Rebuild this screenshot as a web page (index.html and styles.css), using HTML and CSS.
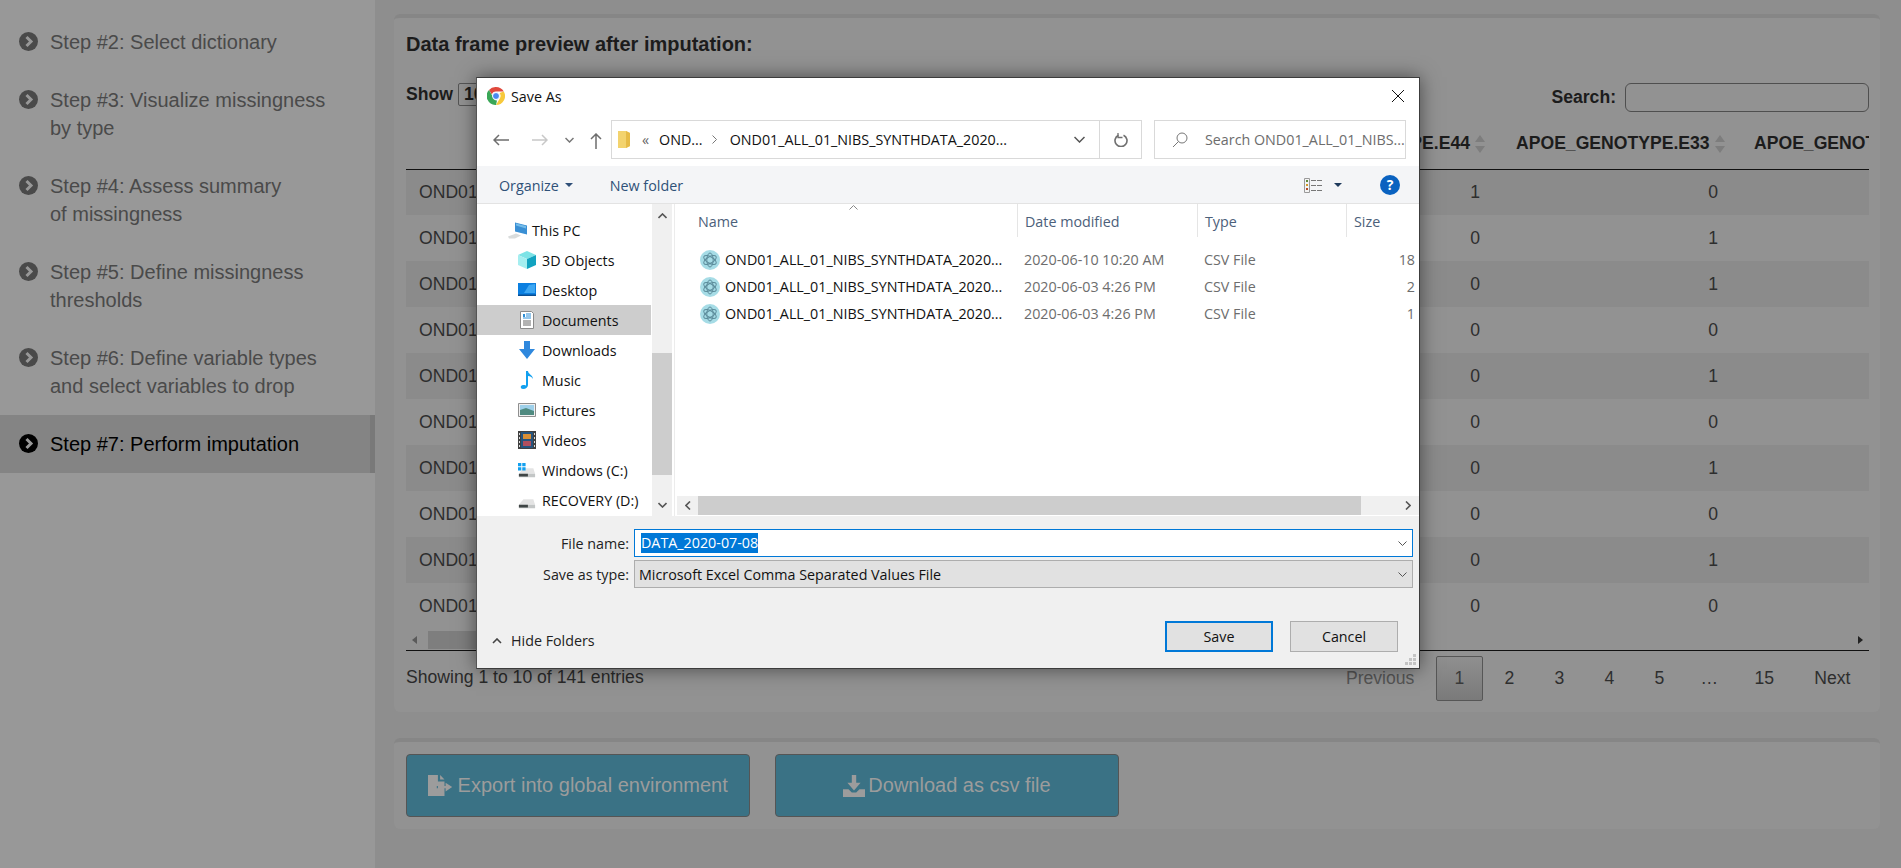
FILE: index.html
```html
<!DOCTYPE html>
<html lang="en">
<head>
  <meta charset="UTF-8" />
  <title>Perform imputation</title>
  <link rel="stylesheet" href="styles.css">
</head>
<body>
  <svg class="sprites" width="0" height="0">
    <symbol id="step-icon" viewBox="0 0 19 19">
      <circle cx="9.5" cy="9.5" r="9.5" fill="currentColor" />
      <path d="M7.5 5l4.5 4.5-4.5 4.5" fill="none" stroke="#989898" stroke-width="3" />
    </symbol>
    <symbol id="sort-icon" viewBox="0 0 10 18">
      <path d="M5 0l5 7H0zM5 18l-5-7h10z" fill="#7d7d7d" />
    </symbol>
    <symbol id="file-icon" viewBox="0 0 20 20">
      <circle cx="10" cy="10" r="10" fill="#a6dce6" />
      <g fill="none" stroke="#5d8d9c" stroke-width="1">
        <ellipse cx="10" cy="10" rx="7" ry="3.2" transform="rotate(30 10 10)" />
        <ellipse cx="10" cy="10" rx="7" ry="3.2" transform="rotate(-30 10 10)" />
        <ellipse cx="10" cy="10" rx="7" ry="3.2" transform="rotate(90 10 10)" />
      </g>
    </symbol>
    <symbol id="drive-icon" viewBox="0 0 20 12">
      <path d="M1 7l5-6h11l2 6z" fill="#e4e4e4" />
      <path d="M1 7h18v4H1z" fill="#c3c6c6" />
      <path d="M1 7h10v3H1z" fill="#3f4545" />
    </symbol>
  </svg>

  <div class="page">
    <nav class="sidebar">
      <a class="step"><svg class="step-icon"><use href="#step-icon" /></svg><span>Step #2: Select dictionary</span></a>
      <a class="step"><svg class="step-icon"><use href="#step-icon" /></svg><span>Step #3: Visualize missingness<br>by type</span></a>
      <a class="step"><svg class="step-icon"><use href="#step-icon" /></svg><span>Step #4: Assess summary<br>of missingness</span></a>
      <a class="step"><svg class="step-icon"><use href="#step-icon" /></svg><span>Step #5: Define missingness<br>thresholds</span></a>
      <a class="step"><svg class="step-icon"><use href="#step-icon" /></svg><span>Step #6: Define variable types<br>and select variables to drop</span></a>
      <a class="step active"><svg class="step-icon"><use href="#step-icon" /></svg><span>Step #7: Perform imputation</span></a>
    </nav>

    <main class="content">
      <section class="card">
        <h3 class="card-title">Data frame preview after imputation:</h3>
        <div class="table-controls">
          <label class="show-label">Show <span class="show-select">10</span></label>
          <label class="search-label">Search: <input class="search-input" type="text" /></label>
        </div>
        <div class="table-clip">
          <table class="data-table">
            <thead>
              <tr>
                <th class="col-id">ID</th>
                <th class="col-a">APOE_GENOTYPE.E44<svg class="sort"><use href="#sort-icon" /></svg></th>
                <th class="col-b">APOE_GENOTYPE.E33<svg class="sort"><use href="#sort-icon" /></svg></th>
                <th class="col-c">APOE_GENOTYPE.E34<svg class="sort"><use href="#sort-icon" /></svg></th>
              </tr>
            </thead>
            <tbody>
              <tr><td>OND01</td><td class="num">1</td><td class="num">0</td><td></td></tr>
              <tr><td>OND01</td><td class="num">0</td><td class="num">1</td><td></td></tr>
              <tr><td>OND01</td><td class="num">0</td><td class="num">1</td><td></td></tr>
              <tr><td>OND01</td><td class="num">0</td><td class="num">0</td><td></td></tr>
              <tr><td>OND01</td><td class="num">0</td><td class="num">1</td><td></td></tr>
              <tr><td>OND01</td><td class="num">0</td><td class="num">0</td><td></td></tr>
              <tr><td>OND01</td><td class="num">0</td><td class="num">1</td><td></td></tr>
              <tr><td>OND01</td><td class="num">0</td><td class="num">0</td><td></td></tr>
              <tr><td>OND01</td><td class="num">0</td><td class="num">1</td><td></td></tr>
              <tr><td>OND01</td><td class="num">0</td><td class="num">0</td><td></td></tr>
            </tbody>
          </table>
        </div>
        <div class="table-scroll">
          <span class="tri tri-left"></span>
          <span class="table-thumb"></span>
          <span class="tri tri-right"></span>
        </div>
        <div class="table-footer">
          <span class="table-info">Showing 1 to 10 of 141 entries</span>
          <div class="pager">
            <a class="page-btn muted">Previous</a>
            <a class="page-btn current">1</a>
            <a class="page-btn">2</a>
            <a class="page-btn">3</a>
            <a class="page-btn">4</a>
            <a class="page-btn">5</a>
            <span class="page-btn page-gap">…</span>
            <a class="page-btn">15</a>
            <a class="page-btn">Next</a>
          </div>
        </div>
      </section>

      <section class="card actions">
        <button class="action-btn">
          <svg class="action-icon" viewBox="0 0 24 20"><path d="M0 0h9v6h6v4H8v2h7v7H0zM11 0l4 4h-4zM16 7l6 4-6 4v-3H9v-2h7z" fill="currentColor" /></svg>
          Export into global environment
        </button>
        <button class="action-btn">
          <svg class="action-icon" viewBox="0 0 20 20"><path d="M8 0h4v7h4l-6 7-6-7h4zM0 13h5l3 3h4l3-3h5v7H0z" fill="currentColor" /></svg>
          Download as csv file
        </button>
      </section>
    </main>
  </div>

  <div class="dialog">
    <header class="dlg-title">
      <svg class="chrome" viewBox="0 0 18 18">
        <path d="M9 0a9 9 0 0 1 7.8 4.5H9a4.500 4.500 0 0 0-4.200 3L2 3a9 9 0 0 1 7-3z" fill="#e0493d" />
        <path d="M16.800 4.500A9 9 0 0 1 9 18l3.900-6.800A4.500 4.500 0 0 0 12.500 6z" fill="#f7c93c" />
        <path d="M9 18A9 9 0 0 1 2 3l3.800 6.700A4.500 4.500 0 0 0 10 13.400z" fill="#3aa757" />
        <circle cx="9" cy="9" r="3.500" fill="#4a89f0" stroke="#fff" />
      </svg>
      <span class="dlg-name">Save As</span>
      <svg class="close" viewBox="0 0 12 12"><path d="M0 0l12 12M12 0L0 12" stroke="#111" fill="none" /></svg>
    </header>

    <div class="dlg-nav">
      <div class="nav-buttons">
        <svg class="nav-arrow" viewBox="0 0 16 12"><path d="M6 1L1 6l5 5M1 6h15" fill="none" stroke="#6e6e6e" stroke-width="1.500" /></svg>
        <svg class="nav-arrow fwd" viewBox="0 0 16 12"><path d="M10 1l5 5-5 5M15 6H0" fill="none" stroke="#c8c8c8" stroke-width="1.500" /></svg>
        <svg class="nav-down" viewBox="0 0 9 6"><path d="M.5 1l4 4 4-4" fill="none" stroke="#777" stroke-width="1.500" /></svg>
        <svg class="nav-up" viewBox="0 0 12 16"><path d="M1 6l5-5 5 5M6 1v15" fill="none" stroke="#6e6e6e" stroke-width="1.500" /></svg>
      </div>
      <div class="address">
        <svg class="folder" viewBox="0 0 12 17"><path d="M0 0h8l4 2v13l-4 2H0z" fill="#f3d36e" /><path d="M8 0l4 2v13l-4 2z" fill="#e6bb47" /></svg>
        <span class="crumb-back">«</span>
        <span class="crumb">OND...</span>
        <svg class="crumb-sep" viewBox="0 0 5 9"><path d="M.5.5l4 4-4 4" fill="none" stroke="#777" /></svg>
        <span class="crumb">OND01_ALL_01_NIBS_SYNTHDATA_2020...</span>
        <svg class="addr-down" viewBox="0 0 11 7"><path d="M.5 1l5 5 5-5" fill="none" stroke="#555" stroke-width="1.500" /></svg>
        <div class="refresh">
          <svg class="refresh-icon" viewBox="0 0 14 14"><path d="M4.500 2.200A6 6 0 1 0 9.500 2.200" fill="none" stroke="#707070" stroke-width="1.600" /><path d="M4 0v4.500H8.500" fill="none" stroke="#707070" stroke-width="1.300" /></svg>
        </div>
      </div>
      <div class="dlg-search">
        <svg class="search-icon" viewBox="0 0 16 16"><circle cx="10" cy="6" r="5" fill="none" stroke="#777" /><path d="M6.500 9.500L1 15" stroke="#777" fill="none" /></svg>
        <span>Search OND01_ALL_01_NIBS...</span>
      </div>
    </div>

    <div class="dlg-toolbar">
      <span class="tool-btn">Organize<span class="caret"></span></span>
      <span class="tool-btn new-folder">New folder</span>
      <svg class="view-icon" viewBox="0 0 18 15"><path d="M.5.500h5v14h-5z" fill="#f4f4f4" stroke="#9a9a9a" /><path d="M2 2h2v2H2z" fill="#5f8a3c" /><path d="M2 6h2v2H2z" fill="#d19a2a" /><path d="M2 10h2v2H2z" fill="#b54a2a" /><path d="M7 2.500h11M7 7.500h11M7 12.500h11" stroke="#777" stroke-dasharray="5 1" /></svg>
      <span class="caret dark"></span>
      <span class="help">?</span>
    </div>

    <div class="dlg-main">
      <aside class="folders">
        <ul class="folder-list">
          <li class="folder-row root">
            <svg class="fi wide" viewBox="0 0 20 17"><path d="M7 1l12 3v9L7 10z" fill="#3a8fd4" /><path d="M8 2l10 2.500V7L8 4z" fill="#74bce9" /><path d="M0 15l8-3 5 2-6 3H1z" fill="#d9dcdc" /></svg>
            This PC
          </li>
          <li class="folder-row">
            <svg class="fi" viewBox="0 0 18 18"><path d="M9 0l9 4-9 4-9-4z" fill="#7ce3e6" /><path d="M0 4l9 4v10l-9-4z" fill="#a5eef0" /><path d="M18 4L9 8v10l9-4z" fill="#12a3c0" /></svg>
            3D Objects
          </li>
          <li class="folder-row">
            <svg class="fi" viewBox="0 0 18 18"><path d="M0 2h18v13H0z" fill="#0b7fe0" /><path d="M0 13.500h18V15H0z" fill="#0a4f93" /><path d="M11 4l6-1v9H6z" fill="#3ea7f2" /></svg>
            Desktop
          </li>
          <li class="folder-row selected">
            <svg class="fi" viewBox="0 0 18 18"><path d="M2.500.500h11l2 2v15h-13z" fill="#fff" stroke="#8a8a8a" /><path d="M8 3h5M8 5h5M5 7h8" stroke="#2d8ed6" /><path d="M5 3h2v3H5z" fill="#2d8ed6" /><path d="M5 10h8M5 12h8M5 14h8" stroke="#666" /></svg>
            Documents
          </li>
          <li class="folder-row">
            <svg class="fi" viewBox="0 0 18 18"><path d="M6 0h6v8h5l-8 10L1 8h5z" fill="#2f88dd" /></svg>
            Downloads
          </li>
          <li class="folder-row">
            <svg class="fi" viewBox="0 0 18 18"><path d="M8 0h2c0 3 5 4 5 8-1-2-3-3-5-3v9c0 2-2 4-5 4s-3-4 0-4c1 0 2 0 3 .5z" fill="#12a0ef" /></svg>
            Music
          </li>
          <li class="folder-row">
            <svg class="fi" viewBox="0 0 18 14"><path d="M.5.500h17v13H.5z" fill="#f0f0f0" stroke="#8f8f8f" /><path d="M2 2h14v6H2z" fill="#9ed0ea" /><path d="M2 7l6-2 8 3v4H2z" fill="#4f8a80" /></svg>
            Pictures
          </li>
          <li class="folder-row">
            <svg class="fi" viewBox="0 0 18 18"><path d="M0 0h18v18H0z" fill="#404040" /><path d="M3 1h12v16H3z" fill="#26547e" /><path d="M5 3h8v5H5z" fill="#d98f35" /><path d="M5 10h8v5H5z" fill="#b14f5e" /><path d="M1 2h1v2H1zM1 6h1v2H1zM1 10h1v2H1zM1 14h1v2H1zM16 2h1v2h-1zM16 6h1v2h-1zM16 10h1v2h-1zM16 14h1v2h-1z" fill="#ddd" /></svg>
            Videos
          </li>
          <li class="folder-row">
            <svg class="fi" viewBox="0 0 19 15"><use href="#drive-icon" y="3" /><path d="M0 0h3.500v3.500H0zM4.500 0H8v3.500H4.500zM0 4.500h3.500V8H0zM4.500 4.500H8V8H4.500z" fill="#12a0ef" /></svg>
            Windows (C:)
          </li>
          <li class="folder-row">
            <svg class="fi" viewBox="0 0 19 15"><use href="#drive-icon" y="4" /></svg>
            RECOVERY (D:)
          </li>
        </ul>
        <div class="v-scroll">
          <svg class="sb-arrow" viewBox="0 0 9 6"><path d="M.5 5l4-4 4 4" fill="none" stroke="#555" stroke-width="1.600" /></svg>
          <span class="v-thumb"></span>
          <svg class="sb-arrow low" viewBox="0 0 9 6"><path d="M.5 1l4 4 4-4" fill="none" stroke="#555" stroke-width="1.600" /></svg>
        </div>
      </aside>

      <div class="files">
        <div class="file-head">
          <span class="head-cell name">Name<svg class="sort-up" viewBox="0 0 9 5"><path d="M.5 4.500l4-4 4 4" fill="none" stroke="#888" /></svg></span>
          <span class="head-cell">Date modified</span>
          <span class="head-cell">Type</span>
          <span class="head-cell">Size</span>
        </div>
        <div class="file-list">
          <div class="file-row">
            <span class="file-name"><svg class="file-icon"><use href="#file-icon" /></svg>OND01_ALL_01_NIBS_SYNTHDATA_2020...</span>
            <span class="file-meta">2020-06-10 10:20 AM</span>
            <span class="file-meta">CSV File</span>
            <span class="file-meta size">18</span>
          </div>
          <div class="file-row">
            <span class="file-name"><svg class="file-icon"><use href="#file-icon" /></svg>OND01_ALL_01_NIBS_SYNTHDATA_2020...</span>
            <span class="file-meta">2020-06-03 4:26 PM</span>
            <span class="file-meta">CSV File</span>
            <span class="file-meta size">2</span>
          </div>
          <div class="file-row">
            <span class="file-name"><svg class="file-icon"><use href="#file-icon" /></svg>OND01_ALL_01_NIBS_SYNTHDATA_2020...</span>
            <span class="file-meta">2020-06-03 4:26 PM</span>
            <span class="file-meta">CSV File</span>
            <span class="file-meta size">1</span>
          </div>
        </div>
        <div class="h-scroll">
          <svg class="hb-arrow" viewBox="0 0 6 9"><path d="M5 .5l-4 4 4 4" fill="none" stroke="#555" stroke-width="1.600" /></svg>
          <span class="h-thumb"></span>
          <svg class="hb-arrow right" viewBox="0 0 6 9"><path d="M1 .5l4 4-4 4" fill="none" stroke="#555" stroke-width="1.600" /></svg>
        </div>
      </div>
    </div>

    <footer class="dlg-footer">
      <div class="field-row">
        <span class="field-label">File name:</span>
        <div class="field focused">
          <span class="selected-text">DATA_2020-07-08</span>
          <svg class="field-down" viewBox="0 0 9 5"><path d="M.5.500l4 4 4-4" fill="none" stroke="#555" /></svg>
        </div>
      </div>
      <div class="field-row">
        <span class="field-label">Save as type:</span>
        <div class="field combo">
          <span>Microsoft Excel Comma Separated Values File</span>
          <svg class="field-down" viewBox="0 0 9 5"><path d="M.5.500l4 4 4-4" fill="none" stroke="#555" /></svg>
        </div>
      </div>
      <div class="dlg-buttons">
        <span class="hide-folders">
          <svg class="hide-icon" viewBox="0 0 10 6"><path d="M1 5l4-4 4 4" fill="none" stroke="#444" stroke-width="1.600" /></svg>
          Hide Folders
        </span>
        <button class="dlg-btn primary">Save</button>
        <button class="dlg-btn">Cancel</button>
      </div>
      <svg class="grip" viewBox="0 0 11 11"><path d="M8 0h3v3H8zM4 4h3v3H4zM8 4h3v3H8zM0 8h3v3H0zM4 8h3v3H4zM8 8h3v3H8z" fill="#c4c4c4" /></svg>
    </footer>
  </div>
</body>
</html>
```

FILE: styles.css
```css
* {
  box-sizing: border-box;
}

html, body {
  margin: 0;
  height: 868px;
  overflow: hidden;
}

body {
  background-color: #8e8e8e;
  color: #2a2a2a;
  font-family: "Liberation Sans", Arial, sans-serif;
  font-size: 17.6px;
}

.sprites {
  position: absolute;
}

.page {
  display: grid;
  grid-template-columns: 375px minmax(0, 1fr);
  height: 868px;
}

/* sidebar */

.sidebar {
  background-color: #989898;
  padding-top: 13px;
}

.step {
  display: flex;
  align-items: flex-start;
  gap: 12px;
  padding: 15px 19px;
  color: #4a4a4a;
  font-size: 20px;
  line-height: 28px;
}

.step-icon {
  flex: none;
  width: 19px;
  height: 19px;
  margin-top: 4px;
}

.step.active {
  background-color: #848484;
  border-right: 5px solid #797979;
  color: #000;
}

/* main cards */

.content {
  padding: 14px 21px 0 19px;
}

.card {
  background-color: #929292;
  border-top: 4px solid #868686;
  border-radius: 6px;
  padding: 0 11px 11px 12px;
}

.card-title {
  margin: 0 0 29px;
  padding-top: 16px;
  color: #1c1c1c;
  font-size: 20px;
  line-height: 20px;
}

.table-controls {
  display: flex;
  justify-content: space-between;
  align-items: flex-start;
  height: 29px;
}

.show-label {
  display: flex;
  align-items: center;
  gap: 5px;
  color: #1c1c1c;
  font-size: 17.6px;
  font-weight: bold;
}

.show-select {
  width: 50px;
  height: 23px;
  padding-left: 5px;
  border: 1px solid #555;
  border-radius: 2px;
  line-height: 21px;
}

.search-label {
  display: flex;
  align-items: center;
  gap: 9px;
  color: #1c1c1c;
  font-weight: bold;
}

.search-input {
  width: 244px;
  height: 29px;
  background: transparent;
  border: 1px solid #4f4f4f;
  border-radius: 6px;
}

.table-clip {
  overflow: hidden;
}

.data-table {
  width: 1600px;
  border-collapse: collapse;
  table-layout: fixed;
}

.data-table th {
  height: 57px;
  padding: 6px 0 0 16px;
  border-bottom: 1px solid #111;
  color: #1c1c1c;
  font-size: 17.6px;
  text-align: right;
  white-space: nowrap;
}

.col-id {
  width: 840px;
}

.col-a {
  width: 254px;
}

.col-b {
  width: 238px;
}

.data-table .col-id {
  color: transparent;
}

.data-table .col-c {
  text-align: left;
}

.sort {
  width: 10px;
  height: 18px;
  margin: 0 15px 0 5px;
  vertical-align: -4px;
}

.data-table td {
  height: 46px;
  padding: 0 13px;
  color: #2e2e2e;
}

.data-table td.num {
  padding-right: 20px;
  text-align: right;
}

.data-table tbody tr:nth-child(odd) {
  background-color: #8b8b8b;
}

.table-scroll {
  display: flex;
  align-items: center;
  height: 22px;
  padding: 0 6px;
  border-bottom: 1px solid #111;
}

.table-thumb {
  width: 700px;
  height: 18px;
  margin-left: 11px;
  background-color: #7e7e7e;
}

.tri {
  width: 0;
  height: 0;
  border-top: 4px solid transparent;
  border-bottom: 4px solid transparent;
}

.tri-left {
  border-right: 5px solid #5a5a5a;
}

.tri-right {
  margin-left: auto;
  border-left: 5px solid #222;
}

.table-footer {
  display: flex;
  justify-content: space-between;
  align-items: flex-start;
  padding-top: 5px;
}

.table-info {
  margin-top: 11px;
}

.pager {
  display: flex;
}

.page-btn {
  height: 45px;
  margin-left: 3px;
  padding: 0 17.6px;
  border: 1px solid transparent;
  border-radius: 2px;
  color: #2e2e2e;
  line-height: 43px;
}

.page-btn.muted {
  color: #555;
}

.page-btn.current {
  background: linear-gradient(#8f8f8f, #7a7a7a);
  border-color: #565656;
  color: #3a3a3a;
}

.page-btn.page-gap {
  width: 47px;
  padding: 0;
  text-align: center;
}

.actions {
  display: flex;
  gap: 25px;
  margin-top: 26px;
  padding-top: 12px;
  padding-bottom: 12px;
}

.action-btn {
  display: flex;
  justify-content: center;
  align-items: center;
  gap: 3px;
  width: 344px;
  height: 63px;
  background-color: #3a7285;
  border: 1px solid #555;
  border-radius: 4px;
  color: #9c9c9c;
  font-family: inherit;
  font-size: 20px;
}

.action-icon {
  height: 22px;
  width: auto;
}

/* save as dialog */

.dialog {
  position: absolute;
  left: 476px;
  top: 77px;
  display: flex;
  flex-direction: column;
  width: 944px;
  height: 592px;
  background-color: #fff;
  border: 1px solid #3c3c3c;
  border-left-color: #555;
  box-shadow: 0 0 18px rgba(0, 0, 0, 0.5);
  color: #111;
  font-family: "Open Sans", "Noto Sans", sans-serif;
  font-size: 14.3px;
}

.dlg-title {
  display: flex;
  align-items: flex-start;
  flex: none;
  height: 42px;
  padding: 9px 15px 0 10px;
}

.chrome {
  width: 18px;
  height: 18px;
  margin-right: 6px;
}

.dlg-name {
  line-height: 19px;
}

.close {
  width: 12px;
  height: 12px;
  margin: 3px 0 0 auto;
}

.dlg-nav {
  display: flex;
  flex: none;
  height: 46px;
}

.nav-buttons {
  display: flex;
  align-items: center;
  width: 134px;
  height: 39px;
  padding-left: 16px;
}

.nav-arrow {
  width: 16px;
  height: 12px;
}

.fwd {
  margin-left: 23px;
}

.nav-down {
  width: 9px;
  height: 6px;
  margin-left: 17px;
}

.nav-up {
  width: 12px;
  height: 16px;
  margin: 2px 0 0 16px;
}

.address {
  display: flex;
  align-items: center;
  width: 531px;
  height: 39px;
  padding-left: 6px;
  border: 1px solid #d9d9d9;
  white-space: nowrap;
}

.folder {
  width: 12px;
  height: 17px;
}

.crumb-back {
  margin: 0 10px 0 12px;
  color: #666;
}

.crumb-sep {
  width: 5px;
  height: 9px;
  margin: 0 13px 0 9px;
}

.addr-down {
  width: 11px;
  height: 7px;
  margin-left: auto;
}

.refresh {
  display: flex;
  justify-content: center;
  align-items: center;
  width: 42px;
  height: 37px;
  margin-left: 14px;
  border-left: 1px solid #d9d9d9;
}

.refresh-icon {
  width: 14px;
  height: 14px;
}

.dlg-search {
  display: flex;
  align-items: center;
  gap: 17px;
  width: 252px;
  height: 39px;
  margin-left: 12px;
  padding-left: 17px;
  border: 1px solid #d9d9d9;
  color: #6d6d6d;
  white-space: nowrap;
}

.search-icon {
  width: 16px;
  height: 16px;
}

.dlg-toolbar {
  display: flex;
  align-items: center;
  flex: none;
  height: 38px;
  padding: 1px 0 0 22px;
  background-color: #f4f5f7;
  border-bottom: 1px solid #e3e3e3;
  color: #2f5178;
}

.tool-btn {
  display: flex;
  align-items: center;
}

.new-folder {
  margin-left: 37px;
}

.caret {
  width: 0;
  height: 0;
  margin-left: 6px;
  border-left: 4px solid transparent;
  border-right: 4px solid transparent;
  border-top: 4px solid #2f4f78;
}

.caret.dark {
  margin-left: 12px;
  border-top-color: #1f3a5c;
}

.view-icon {
  width: 18px;
  height: 15px;
  margin-left: auto;
}

.help {
  width: 20px;
  height: 20px;
  margin: 0 19px 0 38px;
  background-color: #0a62c0;
  border-radius: 50%;
  color: #fff;
  font-weight: bold;
  font-size: 14px;
  line-height: 20px;
  text-align: center;
}

.dlg-main {
  display: flex;
  flex: none;
  height: 312px;
}

.folders {
  display: flex;
  flex: none;
  width: 198px;
  border-right: 1px solid #ececec;
  padding-right: 2px;
}

.folder-list {
  flex: none;
  width: 174px;
  margin: 0 1px 0 0;
  padding: 11px 0 0;
  list-style: none;
  overflow: hidden;
}

.folder-row {
  display: flex;
  align-items: center;
  gap: 6px;
  height: 30px;
  padding-left: 41px;
  white-space: nowrap;
}

.folder-row.root {
  padding-left: 31px;
  gap: 4px;
}

.folder-row.selected {
  background-color: #cdcdcd;
}

.fi {
  width: 18px;
  height: 18px;
}

.fi.wide {
  width: 20px;
}

.v-scroll {
  display: flex;
  flex-direction: column;
  align-items: center;
  width: 20px;
  background-color: #f0f0f0;
}

.sb-arrow {
  flex: none;
  width: 9px;
  height: 6px;
  margin-top: 9px;
}

.sb-arrow.low {
  margin-top: auto;
  margin-bottom: 8px;
}

.v-thumb {
  flex: none;
  width: 100%;
  height: 122px;
  margin-top: 134px;
  background-color: #cdcdcd;
}

.files {
  display: flex;
  flex-direction: column;
  flex: 1;
  padding-left: 2px;
}

.file-head,
.file-row {
  display: grid;
  grid-template-columns: 342px 180px 149px 1fr;
}

.file-head {
  flex: none;
  height: 33px;
  margin-left: -2px;
  color: #4c607a;
}

.head-cell {
  padding: 8px 0 0 7px;
  border-left: 1px solid #e5e5e5;
}

.head-cell.name {
  position: relative;
  padding-left: 23px;
  border-left: none;
}

.sort-up {
  position: absolute;
  left: 174px;
  top: 1px;
  width: 9px;
  height: 5px;
}

.file-list {
  flex: 1;
  margin-left: -2px;
  padding-top: 9px;
}

.file-row {
  height: 27px;
  align-items: center;
}

.file-name {
  display: flex;
  align-items: center;
  gap: 5px;
  padding-left: 25px;
  white-space: nowrap;
}

.file-icon {
  width: 20px;
  height: 20px;
}

.file-meta {
  padding-left: 7px;
  color: #6d6d6d;
}

.file-meta.size {
  padding-right: 4px;
  text-align: right;
}

.h-scroll {
  display: flex;
  align-items: center;
  flex: none;
  height: 19px;
  margin-bottom: 1px;
  background-color: #f0f0f0;
}

.hb-arrow {
  flex: none;
  width: 6px;
  height: 9px;
  margin: 0 7px 0 8px;
}

.h-thumb {
  width: 663px;
  height: 100%;
  background-color: #cdcdcd;
}

.hb-arrow.right {
  margin: 0 8px 0 auto;
}

.dlg-footer {
  position: relative;
  flex: 1;
  padding-top: 13px;
  background-color: #f0f0f0;
}

.field-row {
  display: flex;
  align-items: center;
  gap: 5px;
  height: 28px;
  margin-bottom: 3px;
}

.field-label {
  width: 152px;
  color: #222;
  text-align: right;
}

.field {
  display: flex;
  align-items: center;
  width: 779px;
  height: 28px;
  padding-left: 4px;
}

.field.focused {
  background-color: #fff;
  border: 1px solid #0078d7;
  padding-left: 6px;
}

.field.combo {
  background-color: #e1e1e1;
  border: 1px solid #adadad;
}

.selected-text {
  background-color: #0078d7;
  color: #fff;
  line-height: 20px;
}

.field-down {
  width: 9px;
  height: 5px;
  margin: 0 5px 0 auto;
}

.dlg-buttons {
  display: flex;
  align-items: flex-start;
  margin-top: 33px;
  padding: 0 21px 0 15px;
}

.hide-folders {
  display: flex;
  align-items: center;
  gap: 9px;
  margin: 10px auto 0 0;
  color: #222;
}

.hide-icon {
  width: 10px;
  height: 6px;
}

.dlg-btn {
  width: 108px;
  height: 31px;
  margin-left: 17px;
  background-color: #e1e1e1;
  border: 1px solid #adadad;
  color: #111;
  font-family: inherit;
  font-size: 14.3px;
}

.dlg-btn.primary {
  border: 2px solid #0078d7;
}

.grip {
  position: absolute;
  right: 3px;
  bottom: 3px;
  width: 11px;
  height: 11px;
}
```
